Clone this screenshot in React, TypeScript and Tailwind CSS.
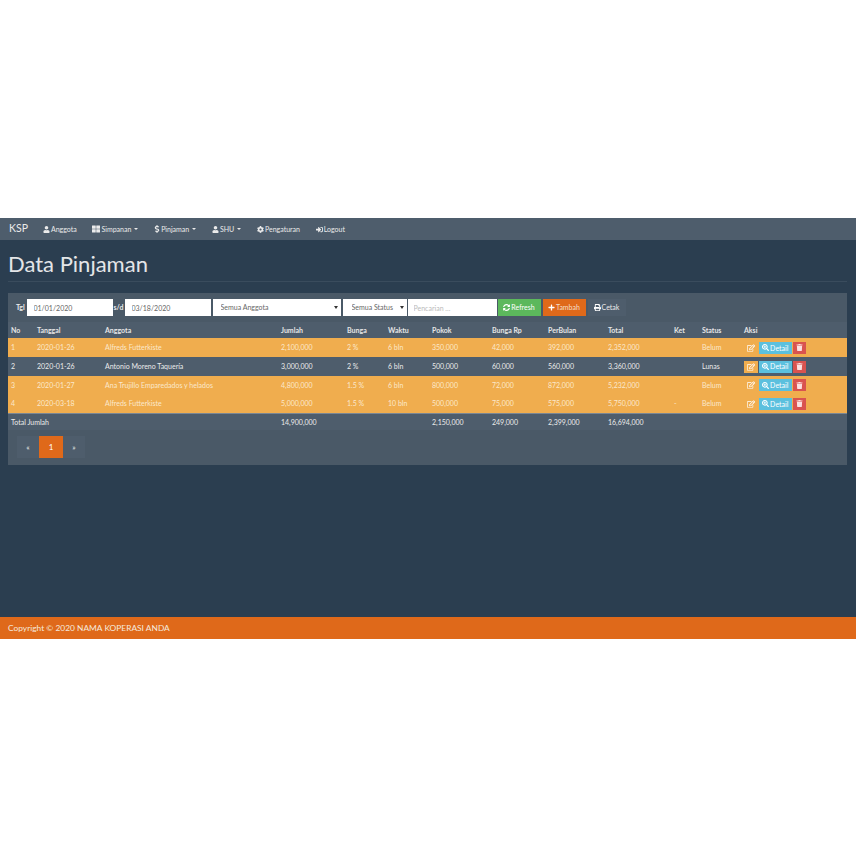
import {
  FaUser,
  FaThLarge,
  FaDollarSign,
  FaCog,
  FaSignInAlt,
  FaSyncAlt,
  FaPlus,
  FaPrint,
  FaRegEdit,
  FaSearchPlus,
  FaTrash,
} from "react-icons/fa";

const rows = [
  { no: "1", tgl: "2020-01-26", nama: "Alfreds Futterkiste", jumlah: "2,100,000", bunga: "2 %", waktu: "6 bln", pokok: "350,000", rp: "42,000", bulan: "392,000", total: "2,352,000", ket: "", status: "Belum", warn: true },
  { no: "2", tgl: "2020-01-26", nama: "Antonio Moreno Taquería", jumlah: "3,000,000", bunga: "2 %", waktu: "6 bln", pokok: "500,000", rp: "60,000", bulan: "560,000", total: "3,360,000", ket: "", status: "Lunas", warn: false },
  { no: "3", tgl: "2020-01-27", nama: "Ana Trujillo Emparedados y helados", jumlah: "4,800,000", bunga: "1.5 %", waktu: "6 bln", pokok: "800,000", rp: "72,000", bulan: "872,000", total: "5,232,000", ket: "", status: "Belum", warn: true },
  { no: "4", tgl: "2020-03-18", nama: "Alfreds Futterkiste", jumlah: "5,000,000", bunga: "1.5 %", waktu: "10 bln", pokok: "500,000", rp: "75,000", bulan: "575,000", total: "5,750,000", ket: "-", status: "Belum", warn: true },
];

const headers = ["No", "Tanggal", "Anggota", "Jumlah", "Bunga", "Waktu", "Pokok", "Bunga Rp", "PerBulan", "Total", "Ket", "Status", "Aksi"];

const NavItem = ({ icon, label, caret }: { icon: React.ReactNode; label: string; caret?: boolean }) => (
  <a className="flex items-center gap-[1px] text-[7px] text-[#ebebeb]">
    {icon}
    <span>{label}</span>
    {caret && <span className="ml-[2px] border-x-[2px] border-t-[2px] border-x-transparent border-t-[#ebebeb]" />}
  </a>
);

export default function App() {
  return (
    <div className="bg-white h-[856px] pt-[218px] font-['Lato','Open_Sans',sans-serif] text-[#ebebeb]">
      <div className="h-[421px] flex flex-col bg-[#2b3e50]">
        {/* Navbar */}
        <nav className="h-[22px] shrink-0 bg-[#4e5d6c] flex items-center pl-[9px]">
          <span className="text-[10.5px] mr-[15px] text-[#ebebeb]">KSP</span>
          <div className="flex items-center gap-[15.75px]">
            <NavItem icon={<FaUser className="w-[7px] h-[7px]" />} label="Anggota" />
            <NavItem icon={<FaThLarge className="w-[8px] h-[8px]" />} label="Simpanan" caret />
            <NavItem icon={<FaDollarSign className="w-[6px] h-[8px]" />} label="Pinjaman" caret />
            <NavItem icon={<FaUser className="w-[7px] h-[7px]" />} label="SHU" caret />
            <NavItem icon={<FaCog className="w-[7px] h-[7px]" />} label="Pengaturan" />
            <NavItem icon={<FaSignInAlt className="w-[7px] h-[7px]" />} label="Logout" />
          </div>
        </nav>

        {/* Content */}
        <main className="flex-1 pl-[8px] pr-[9px]">
          <h1 className="text-[22px] leading-[28px] font-normal text-[#e4e6e8] pt-[10px] pb-[3px] border-b border-[#3a4c5d]">
            Data Pinjaman
          </h1>

          <section className="mt-[11px] bg-[#4a5967]">
            {/* Toolbar */}
            <div className="h-[29px] flex items-center text-[7px] pl-[8px]">
              <span className="w-[11px] font-bold">Tgl</span>
              <input readOnly value="01/01/2020" className="w-[86px] h-[17px] ml-[-0.5px] bg-white text-[#666] pl-[7px] text-[7px] outline-none" />
              <span className="w-[12px] text-center font-bold">s/d</span>
              <input readOnly value="03/18/2020" className="w-[86px] h-[17px] bg-white text-[#666] pl-[7px] text-[7px] outline-none" />
              <div className="relative w-[128px] h-[17px] ml-[2px] bg-white text-[#666]">
                <select className="w-full h-full appearance-none bg-white pl-[8px] text-[7px] outline-none">
                  <option>Semua Anggota</option>
                </select>
                <span className="absolute right-[3px] top-[7px] border-x-[2px] border-t-[3px] border-x-transparent border-t-[#333]" />
              </div>
              <div className="relative w-[64px] h-[17px] ml-[2px] bg-white text-[#666]">
                <select className="w-full h-full appearance-none bg-white pl-[9px] text-[7px] outline-none">
                  <option>Semua Status</option>
                </select>
                <span className="absolute right-[3px] top-[7px] border-x-[2px] border-t-[3px] border-x-transparent border-t-[#333]" />
              </div>
              <input readOnly placeholder="Pencarian ..." className="w-[89px] h-[17px] ml-[1px] bg-white text-[#555] pl-[6px] text-[7px] placeholder:text-[#bbb] outline-none" />
              <button className="w-[43px] h-[17px] ml-[1px] bg-[#5cb85c] flex items-center justify-center gap-[1px] text-white">
                <FaSyncAlt className="w-[7px] h-[7px]" />
                Refresh
              </button>
              <button className="w-[43px] h-[17px] ml-[2px] bg-[#df691a] flex items-center justify-center gap-[1px] text-[#f4ddc8]">
                <FaPlus className="w-[7px] h-[7px] text-white" />
                Tambah
              </button>
              <button className="w-[38px] h-[17px] ml-[2px] bg-[#4e5d6c] flex items-center justify-center gap-[1px]">
                <FaPrint className="w-[7px] h-[7px] text-white" />
                Cetak
              </button>
            </div>

            {/* Table */}
            <table className="w-full table-fixed border-collapse text-[7px]">
              <colgroup>
                <col className="w-[26px]" />
                <col className="w-[68px]" />
                <col className="w-[176px]" />
                <col className="w-[66px]" />
                <col className="w-[41px]" />
                <col className="w-[44px]" />
                <col className="w-[60px]" />
                <col className="w-[56px]" />
                <col className="w-[60px]" />
                <col className="w-[66px]" />
                <col className="w-[28px]" />
                <col className="w-[42px]" />
                <col className="w-[106px]" />
              </colgroup>
              <thead>
                <tr className="h-[16px] bg-[#4e5d6c]">
                  {headers.map((h) => (
                    <th key={h} className="text-left font-bold pl-[3px] p-0 text-[#e6e6e6]">{h}</th>
                  ))}
                </tr>
              </thead>
              <tbody>
                {rows.map((r) => (
                  <tr key={r.no} className={r.warn ? "h-[18.75px] bg-[#f0ad4e] text-[#fbe8cc]" : "h-[18.75px] bg-[#4e5d6c] text-[#ebebeb]"}>
                    <td className="pl-[3px]">{r.no}</td>
                    <td className="pl-[3px]">{r.tgl}</td>
                    <td className="pl-[3px]">{r.nama}</td>
                    <td className="pl-[3px]">{r.jumlah}</td>
                    <td className="pl-[3px]">{r.bunga}</td>
                    <td className="pl-[3px]">{r.waktu}</td>
                    <td className="pl-[3px]">{r.pokok}</td>
                    <td className="pl-[3px]">{r.rp}</td>
                    <td className="pl-[3px]">{r.bulan}</td>
                    <td className="pl-[3px]">{r.total}</td>
                    <td className="pl-[3px]">{r.ket}</td>
                    <td className="pl-[3px]">{r.status}</td>
                    <td className="pl-[3px]">
                      <div className="flex items-center gap-[1.5px] pt-[1px]">
                        <button className="w-[13.5px] h-[12px] bg-[#f0ad4e] flex items-center justify-center text-white">
                          <FaRegEdit className="w-[8px] h-[8px]" />
                        </button>
                        <button className="w-[32.5px] h-[12px] bg-[#5bc0de] flex items-center justify-center gap-[1px] text-white">
                          <FaSearchPlus className="w-[7px] h-[7px]" />
                          Detail
                        </button>
                        <button className="w-[13px] h-[12px] bg-[#d9534f] flex items-center justify-center text-[#fbe0e0]">
                          <FaTrash className="w-[7px] h-[7px]" />
                        </button>
                      </div>
                    </td>
                  </tr>
                ))}
                <tr className="h-[17px] bg-[#4e5d6c] border-t border-[#7b8794]">
                  <td colSpan={3} className="pl-[3px]">Total Jumlah</td>
                  <td className="pl-[3px]">14,900,000</td>
                  <td colSpan={2} />
                  <td className="pl-[3px]">2,150,000</td>
                  <td className="pl-[3px]">249,000</td>
                  <td className="pl-[3px]">2,399,000</td>
                  <td className="pl-[3px]">16,694,000</td>
                  <td colSpan={3} />
                </tr>
              </tbody>
            </table>

            {/* Pagination */}
            <div className="pt-[6px] pb-[7px] pl-[9px] flex">
              <div className="flex h-[22px] bg-[#4e5d6c] text-[8px]">
                <span className="w-[22px] flex items-center justify-center">«</span>
                <span className="w-[24px] flex items-center justify-center bg-[#df691a] text-white">1</span>
                <span className="w-[22px] flex items-center justify-center">»</span>
              </div>
            </div>
          </section>
        </main>

        {/* Footer */}
        <footer className="h-[22px] shrink-0 bg-[#df691a] flex items-center pl-[8px] text-[8.4px] text-[#f5e9df]">
          Copyright © 2020 NAMA KOPERASI ANDA
        </footer>
      </div>
    </div>
  );
}
